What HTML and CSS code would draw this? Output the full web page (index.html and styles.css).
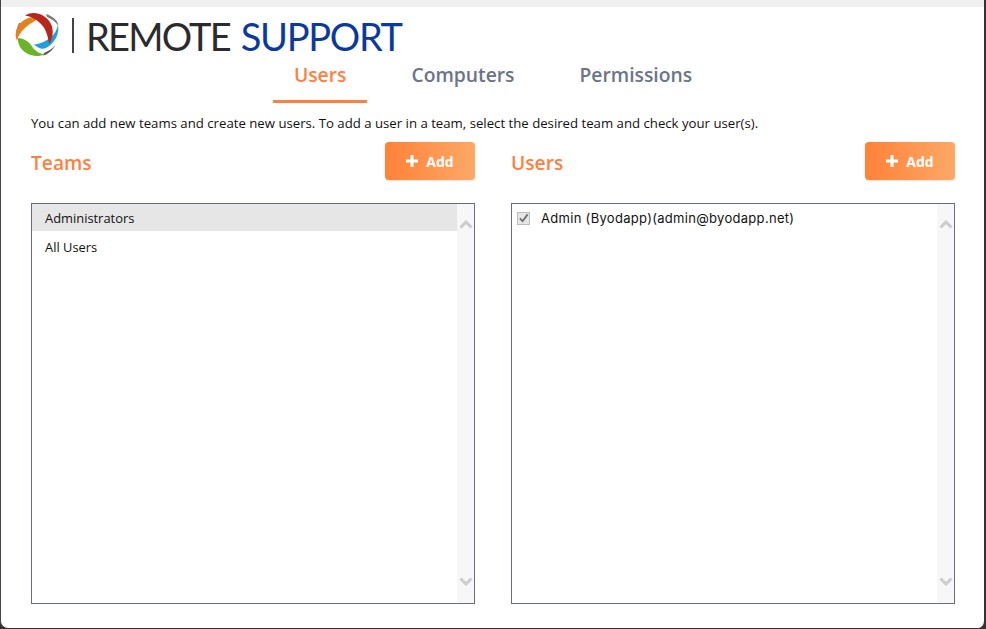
FILE: index.html
```html
<!DOCTYPE html>
<html lang="en">
<head>
<meta charset="utf-8">
<title>Remote Support</title>
<link rel="stylesheet" href="styles.css">
</head>
<body>
<div class="window">
  <div class="topstrip"></div>
  <header class="brand">
    <svg class="logo" viewBox="14 12 46 46" width="46" height="46" aria-hidden="true">
      <path d="M46 14C52 16 58 20 58.500 26C56 22 52 19 47 17Z" fill="#77797c"/>
      <path d="M43 55.500C48 54.500 53 50 55.500 45C53 48 49 51 44 53Z" fill="#55585c"/>
      <path d="M19 23C16.500 28 15.500 33 16 38L17.500 34C18 30 19 26 21 23Z" fill="#77797c"/>
      <path d="M58 25C60 34 54 44 46 48C42 50 38 48 34 44.500C40 44 46 41 50 38C54 35 57 30 58 25Z" fill="#1f9fe0"/>
      <path d="M18 38C17 46 24 54 33 55.500C37 56.500 41 56 44 54.500C38 53 34 50 31 45C28 41 23 38 18 38Z" fill="#6cb32b"/>
      <path d="M41 18C33 15.500 24 18 19 25C15 31 15 36 17 41C18 36 20.500 32 25 28C29 24 35 20.500 41 18Z" fill="#e8801d"/>
      <path d="M25 15.500C33 10.500 45 13 51 24C54 31 53 38 49 44C48 36 46 29 41 24C37 19.500 31 16.500 25 15.500Z" fill="#b8261c"/>
    </svg>
    <span class="divider"></span>
    <span class="wordmark"><span class="word-dark">REMOTE</span> <span class="word-blue">SUPPORT</span></span>
  </header>
  <nav class="tabs">
    <a class="tab active">Users</a>
    <a class="tab">Computers</a>
    <a class="tab">Permissions</a>
  </nav>
  <p class="hint">You can add new teams and create new users. To add a user in a team, select the desired team and check your user(s).</p>
  <main class="columns">
    <section class="col">
      <div class="col-head">
        <h2>Teams</h2>
        <button class="add"><svg viewBox="0 0 12 12" width="12" height="12" aria-hidden="true"><path d="M4.500 0h3v4.500h4.500v3H7.500V12h-3V7.500H0v-3h4.500z" fill="#fff"/></svg>Add</button>
      </div>
      <div class="listbox">
        <ul class="rows">
          <li class="row selected">Administrators</li>
          <li class="row">All Users</li>
        </ul>
        <div class="scrollbar">
          <svg viewBox="0 0 14 9" width="14" height="9" aria-hidden="true"><path d="M1.500 7.500L7 2l5.500 5.500" fill="none" stroke="#cccccc" stroke-width="3"/></svg>
          <svg viewBox="0 0 14 9" width="14" height="9" aria-hidden="true"><path d="M1.500 1.500L7 7l5.500-5.500" fill="none" stroke="#cccccc" stroke-width="3"/></svg>
        </div>
      </div>
    </section>
    <section class="col">
      <div class="col-head">
        <h2>Users</h2>
        <button class="add"><svg viewBox="0 0 12 12" width="12" height="12" aria-hidden="true"><path d="M4.500 0h3v4.500h4.500v3H7.500V12h-3V7.500H0v-3h4.500z" fill="#fff"/></svg>Add</button>
      </div>
      <div class="listbox">
        <ul class="rows">
          <li class="user">
            <span class="check"><svg viewBox="0 0 12 12" width="12" height="12" aria-hidden="true"><path d="M2 6.500L5 9.500 10.500 2" fill="none" stroke="#6f6f6f" stroke-width="2"/></svg></span>
            Admin (Byodapp)(admin@byodapp.net)
          </li>
        </ul>
        <div class="scrollbar">
          <svg viewBox="0 0 14 9" width="14" height="9" aria-hidden="true"><path d="M1.500 7.500L7 2l5.500 5.500" fill="none" stroke="#cccccc" stroke-width="3"/></svg>
          <svg viewBox="0 0 14 9" width="14" height="9" aria-hidden="true"><path d="M1.500 1.500L7 7l5.500-5.500" fill="none" stroke="#cccccc" stroke-width="3"/></svg>
        </div>
      </div>
    </section>
  </main>
</div>
</body>
</html>
```
FILE: styles.css
```css
* { box-sizing: border-box; }
html, body { margin: 0; height: 100%; background: #333; }
body { font-family: "Open Sans", "Noto Sans", sans-serif; overflow: hidden; }
.window {
  width: 986px; height: 629px;
  background: #fff;
  border-left: 1px solid #444;
  border-right: 2px solid #333;
  border-bottom: 1px solid #333;
  border-radius: 0 0 8px 8px;
  display: flex; flex-direction: column;
  overflow: hidden;
}
.topstrip { height: 7px; background: #f0f0f0; flex: none; }
.brand { height: 47px; flex: none; display: flex; align-items: flex-start; padding-left: 13px; }
.logo { flex: none; margin-top: 5px; }
.divider { width: 2px; height: 35px; background: #444; margin: 11px 0 0 12px; }
.wordmark { margin: 9px 0 0 12px; font-family: "Lato", sans-serif; font-size: 38px; font-weight: 400; line-height: 40px; white-space: pre; letter-spacing: -1.8px; word-spacing: 3px; }
.word-dark { color: #2b2b2b; }
.word-blue { color: #0b3a9e; letter-spacing: -1.3px; }
.tabs { display: flex; justify-content: center; gap: 23px; height: 49px; flex: none; margin-left: 1px; }
.tab { padding: 6px 21px 0; font-size: 19.300px; font-weight: 600; line-height: 30px; color: #6b7488; height: 49px; }
.tab.active { color: #ff7f3f; border-bottom: 3px solid #ff7f3f; }
.hint { margin: 11px 0 0 30px; font-size: 13.200px; line-height: 18px; color: #111; white-space: nowrap; }
.columns { display: grid; grid-template-columns: 444px 444px; column-gap: 36px; padding-left: 30px; margin-top: 10px; }
.col-head { height: 38px; display: flex; justify-content: space-between; align-items: center; }
.col-head h2 { margin: 0; font-size: 19.200px; font-weight: 600; color: #ff7f3f; line-height: 24px; padding-top: 3px; }
.add {
  width: 90px; height: 38px; border: 0; border-radius: 4px;
  background: linear-gradient(90deg, #ff8238, #ffa866);
  box-shadow: 0 1px 2px rgba(0,0,0,.12);
  color: #fff; font: 700 14px "Open Sans", sans-serif;
  display: flex; align-items: center; justify-content: center; gap: 8px; padding: 0;
}
.listbox { margin-top: 23px; height: 401px; border: 1px solid #666e7e; display: flex; }
.rows { list-style: none; margin: 0; padding: 0; flex: 1; }
.row { height: 29px; padding-left: 13px; font-size: 12.900px; line-height: 32px; color: #111; }
.row.selected { height: 27px; line-height: 28px; background: #e6e6e6; }
.user { display: flex; align-items: center; height: 28px; padding-left: 5px; font-family: "Inter", sans-serif; font-size: 13px; letter-spacing: .3px; color: #111; gap: 11px; }
.check { width: 13px; height: 13px; background: #e6e6e6; border: 1px solid #bdbdbd; display: flex; align-items: center; justify-content: center; }
.scrollbar { width: 17px; flex: none; background: #f7f7f7; display: flex; flex-direction: column; justify-content: space-between; align-items: center; padding: 16px 0 17px; }
```
